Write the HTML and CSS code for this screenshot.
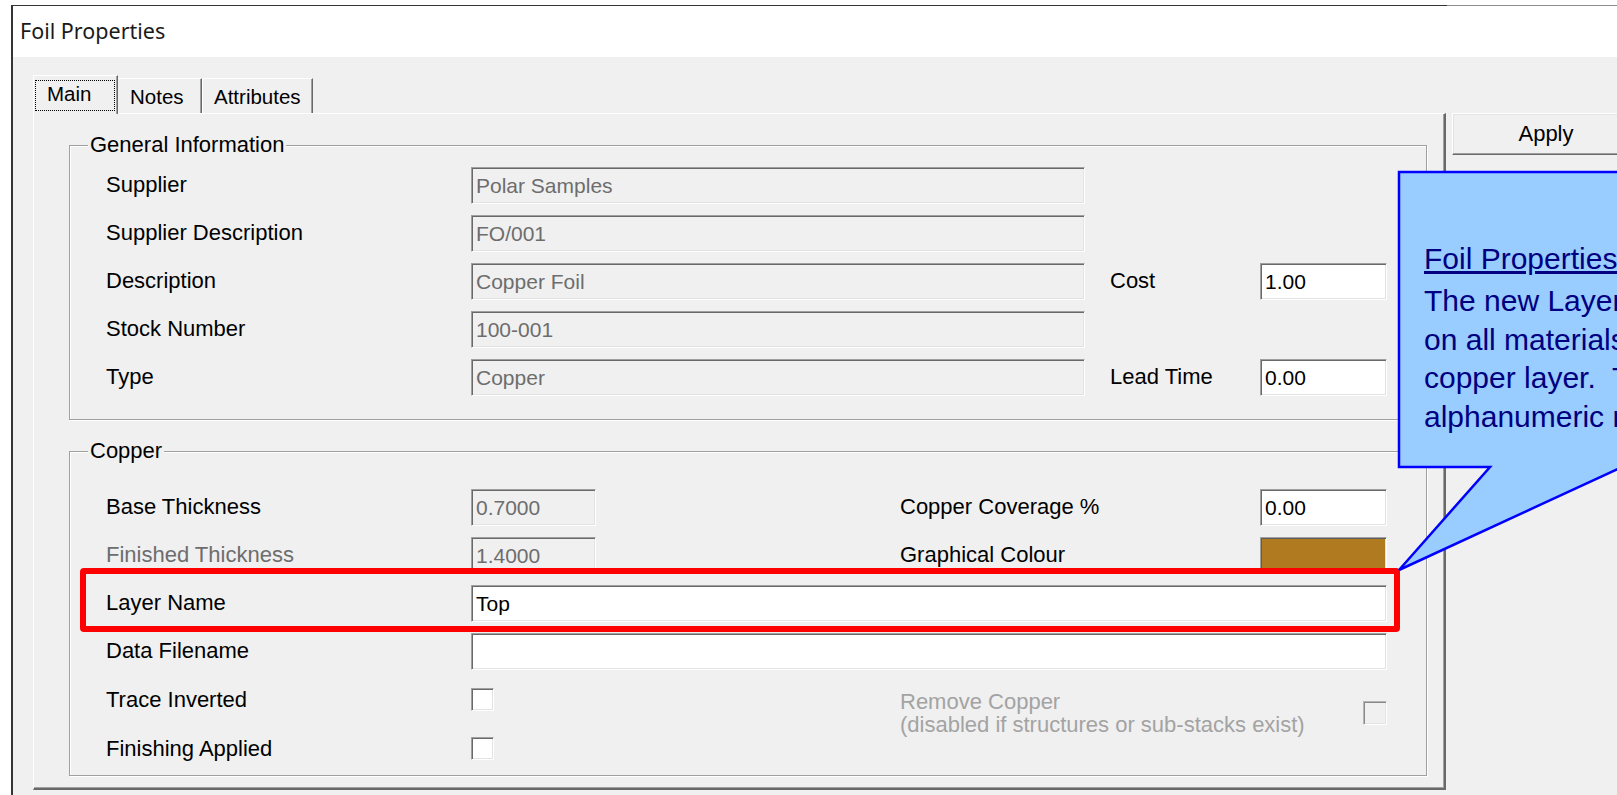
FILE: index.html
```html
<!DOCTYPE html>
<html lang="en">
<head>
<meta charset="utf-8">
<title>Foil Properties</title>
<link rel="stylesheet" href="styles.css">
</head>
<body>
<div class="window">
  <div class="titlebar">Foil Properties</div>
  <div class="client">
    <div class="tabctl">
      <div class="tabstrip">
        <div class="tab sel"><span class="focus">Main</span></div>
        <div class="tab notes">Notes</div>
        <div class="tab attrs">Attributes</div>
      </div>
      <div class="tabpage">
        <fieldset class="group general">
          <legend>General Information</legend>
          <div class="row"><span class="lbl">Supplier</span><div class="field dis c2">Polar Samples</div></div>
          <div class="row"><span class="lbl">Supplier Description</span><div class="field dis c2">FO/001</div></div>
          <div class="row"><span class="lbl">Description</span><div class="field dis c2">Copper Foil</div><span class="lbl c4">Cost</span><div class="field c5">1.00</div></div>
          <div class="row"><span class="lbl">Stock Number</span><div class="field dis c2">100-001</div></div>
          <div class="row"><span class="lbl">Type</span><div class="field dis c2">Copper</div><span class="lbl c4">Lead Time</span><div class="field c5">0.00</div></div>
        </fieldset>
        <fieldset class="group copper">
          <legend>Copper</legend>
          <div class="row"><span class="lbl">Base Thickness</span><div class="field dis short">0.7000</div><span class="lbl">Copper Coverage %</span><div class="field">0.00</div></div>
          <div class="row"><span class="lbl off">Finished Thickness</span><div class="field dis short">1.4000</div><span class="lbl">Graphical Colour</span><div class="field swatch"></div></div>
          <div class="row"><span class="lbl">Layer Name</span><div class="field span">Top</div></div>
          <div class="row"><span class="lbl">Data Filename</span><div class="field span"></div></div>
          <div class="row tall"><span class="lbl">Trace Inverted</span><span class="chk"></span><span class="note">Remove Copper<br>(disabled if structures or sub-stacks exist)</span><span class="chk dis right"></span></div>
          <div class="row tall"><span class="lbl">Finishing Applied</span><span class="chk"></span></div>
        </fieldset>
      </div>
    </div>
    <div class="side"><button class="btn" type="button">Apply</button></div>
  </div>
</div>

<div class="highlight"></div>

<div class="callout">
  <svg class="bubble" width="240" height="410" viewBox="0 0 240 410">
    <path d="M9 2 L250 2 L250 297 L232 297 L9 400 L100 297 L9 297 Z" fill="#99ccff" stroke="#0000ff" stroke-width="2.5" stroke-linejoin="miter"/>
  </svg>
  <div class="co-text">
    <p class="co-title">Foil Properties</p>
    <p class="co-body">The new Layer Name field is available<br>on all materials which carry a<br>copper layer.&nbsp; This is a free-form<br>alphanumeric reference.</p>
  </div>
</div>
</body>
</html>
```

FILE: styles.css
```css
* { box-sizing: border-box; }

html, body {
  margin: 0;
  overflow: hidden;
  background: #fff;
}

body {
  position: relative;
  width: 1617px;
  height: 795px;
  font-family: "Liberation Sans", Arial, sans-serif;
  font-size: 22px;
  color: #000;
}

/* dialog frame */
.window {
  margin: 5px 0 0 11px;
  height: 790px;
  border-left: 2px solid #353535;
  background: #f0f0f0;
}

.titlebar {
  height: 52px;
  padding: 0 0 2px 7px;
  display: flex;
  align-items: center;
  background: linear-gradient(to right, #353535 1434px, #8d8d8d 1434px) top left / 100% 1px no-repeat, #fff;
  font-family: "Noto Sans", "Open Sans", sans-serif;
  font-size: 21.5px;
  color: #1a1a1a;
}

.client {
  display: flex;
  padding: 18px 0 0 20px;
}

/* tab control */
.tabctl {
  flex: none;
  width: 1413px;
}

.tabstrip {
  position: relative;
  z-index: 1;
  display: flex;
  align-items: flex-end;
  height: 38px;
  font-size: 20.5px;
}

.tab {
  height: 35px;
  line-height: 36px;
  background: #f0f0f0;
  border-top: 1px solid #fff;
  border-left: 1px solid #fff;
  border-right: 1px solid #696969;
  box-shadow: inset -1px 0 #a0a0a0;
  white-space: nowrap;
}

.tab.sel {
  width: 85px;
  height: 39px;
  margin-bottom: -1px;
  padding: 4px 2px 0 1px;
}

.focus {
  display: block;
  height: 31px;
  line-height: 26px;
  padding-left: 11px;
  border: 1px dotted #000;
}

.tab.notes {
  width: 84px;
  padding-left: 12px;
  border-left: none;
}

.tab.attrs {
  width: 111px;
  padding-left: 11px;
}

.tabpage {
  height: 677px;
  padding: 20px 17px 0 35px;
  border-style: solid;
  border-width: 1px 2px 2px 1px;
  border-color: #fff #696969 #696969 #fff;
  box-shadow: inset -1px -1px #a0a0a0;
}

/* group boxes */
.group {
  margin: 0;
  min-width: 0;
  padding: 5px 0 18px 18px;
  border: 1px solid #a0a0a0;
  box-shadow: inset 1px 1px #fff, 1px 1px #fff;
}

.group legend {
  padding: 0 2px;
  font-size: 22px;
  line-height: 22px;
  background: #f0f0f0;
}

.group.copper {
  margin-top: 20px;
  padding: 21px 0 2px 18px;
}

.row {
  display: grid;
  height: 48px;
  grid-template-rows: 48px;
  align-items: center;
  margin-left: 18px;
}

.row.tall {
  height: 49px;
  grid-template-rows: 49px;
}

.general .row { grid-template-columns: 365px 614px 25px 150px 127px; }
.copper .row { grid-template-columns: 365px 429px 360px 127px; }

.lbl {
  line-height: 22px;
  white-space: nowrap;
}

.lbl.off { color: #6d6d6d; }

.c2 { grid-column: 2; }
.c4 { grid-column: 4; }
.c5 { grid-column: 5; }

/* sunken edit boxes */
.field {
  height: 37px;
  padding-left: 4px;
  border: 1px solid;
  border-color: #a0a0a0 #fff #fff #a0a0a0;
  box-shadow: inset 1px 1px #696969, inset -1px -1px #e3e3e3;
  background: #fff;
  font-size: 21px;
  line-height: 35px;
  white-space: nowrap;
  overflow: hidden;
}

.field.dis {
  background: #f0f0f0;
  color: #6d6d6d;
}

.field.short { width: 125px; }

.field.span { grid-column: 2 / 5; }

.field.swatch {
  background: #b07a21;
  box-shadow: inset 1px 1px #5e5e5e, inset -1px -1px #e3e3e3;
}

/* check boxes */
.chk {
  grid-column: 2;
  width: 23px;
  height: 23px;
  border: 1px solid;
  border-color: #a0a0a0 #fff #fff #a0a0a0;
  box-shadow: inset 1px 1px #696969, inset -1px -1px #e3e3e3;
  background: #fff;
}

.chk.dis {
  background: #f0f0f0;
  border-color: #b5b5b5 #fff #fff #b5b5b5;
  box-shadow: inset 1px 1px #8a8a8a, inset -1px -1px #e3e3e3;
}

.chk.right {
  grid-column: 4;
  justify-self: end;
  align-self: start;
  margin-top: 26px;
  width: 24px;
  height: 24px;
}

.note {
  grid-column: 3;
  align-self: start;
  margin-top: 15px;
  line-height: 23px;
  color: #a3a3a3;
  white-space: nowrap;
}

/* buttons column */
.side {
  flex: none;
  margin-left: 6px;
  padding-top: 38px;
}

.btn {
  display: block;
  width: 188px;
  height: 42px;
  padding: 0;
  font-family: "Liberation Sans", Arial, sans-serif;
  font-size: 22px;
  color: #000;
  background: #f0f0f0;
  border: 1px solid;
  border-color: #fff #696969 #696969 #fff;
  box-shadow: inset -1px -1px #a0a0a0, inset 1px 1px #e3e3e3;
}

/* annotation: red frame around the Layer Name row */
.highlight {
  position: absolute;
  left: 80px;
  top: 568px;
  width: 1320px;
  height: 64px;
  border: 6px solid #ff0000;
  border-radius: 4px;
}

/* annotation: speech bubble */
.callout {
  position: absolute;
  left: 1390px;
  top: 170px;
  width: 240px;
  height: 410px;
}

.bubble {
  display: block;
  overflow: visible;
}

.co-text {
  position: absolute;
  left: 34px;
  top: 69.5px;
  font-size: 30px;
  line-height: 38.5px;
  color: #000080;
  white-space: nowrap;
}

.co-text p { margin: 0; }

.co-title {
  text-decoration: underline;
  margin-bottom: 4px !important;
}
```
